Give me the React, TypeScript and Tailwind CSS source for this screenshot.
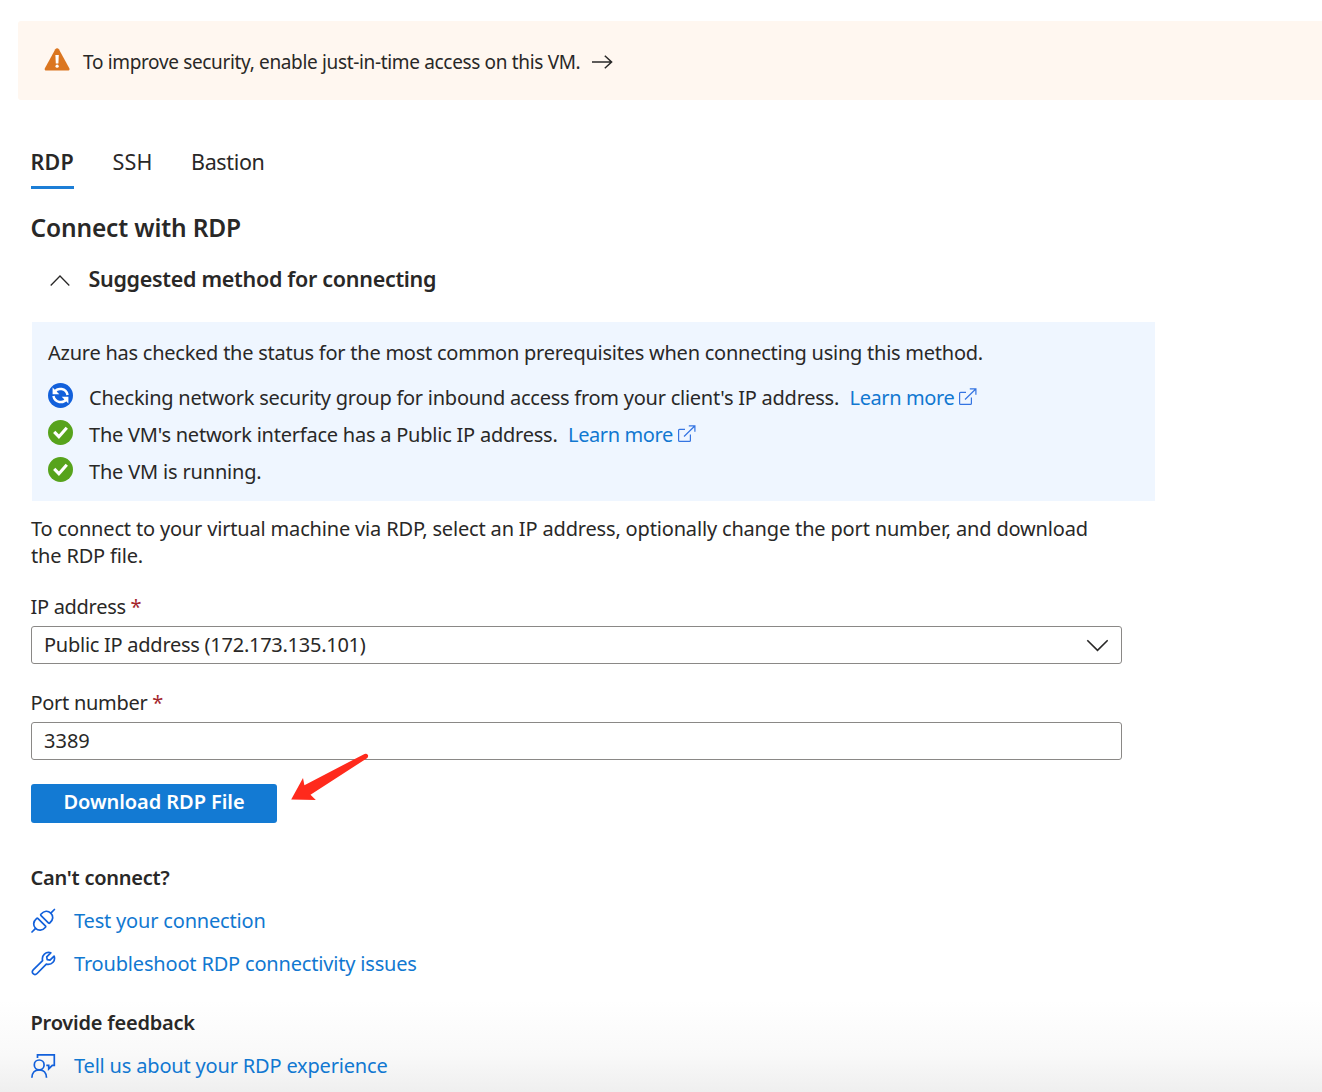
import type { ReactNode } from 'react';

function Warning() {
  return (
    <svg width="26" height="24" viewBox="0 0 26 24" className="shrink-0">
      <path d="M11.300 1.300c.9-1.400 2.700-1.400 3.600 0l10.400 19c.6 1.200 0 2.200-1.300 2.200H2.200C.9 22.500.300 21.500.9 20.300z" fill="#db7620" />
      <path d="M11.400 7h3.400l-.4 8.500h-2.600z" fill="#fff" />
      <circle cx="13.100" cy="18.200" r="1.600" fill="#fff" />
    </svg>
  );
}

function Syncing() {
  return (
    <svg width="25" height="25" viewBox="0 0 25 25" className="shrink-0">
      <circle cx="12.5" cy="12.500" r="12.500" fill="#1260db" />
      <g fill="none" stroke="#fff" strokeWidth="2.500">
        <path d="M7 8.500C9.500 4.600 18 4.800 19.600 12" />
        <path d="M18 16.500C15.500 20.400 7 20.200 5.400 13" />
      </g>
      <path d="M4.600 4.600V11.300H11.300zM20.400 20.400V13.700H13.700z" fill="#fff" />
    </svg>
  );
}

function Success() {
  return (
    <svg width="25" height="25" viewBox="0 0 25 25" className="shrink-0">
      <circle cx="12.5" cy="12.500" r="12.500" fill="#57a31c" />
      <path d="M6.200 11.900 10.900 16.700 18.800 7.700" fill="none" stroke="#fff" strokeWidth="3.100" />
    </svg>
  );
}

function External() {
  return (
    <svg width="18" height="18" viewBox="0 0 18 18" fill="none" stroke="#3474e2" strokeWidth="1.200" className="-mt-[2px] ml-[5px] shrink-0">
      <path d="M7 4.300H1.600a1 1 0 0 0-1 1V15.400a1 1 0 0 0 1 1H11.400a1 1 0 0 0 1-1V9.500" />
      <path d="M6 11.500 16.500 1.200M10.800 .8H16.900V6.700" />
    </svg>
  );
}

function Plug() {
  return (
    <svg width="25" height="25" viewBox="0 0 25 25" fill="none" stroke="#1260db" strokeWidth="1.700" strokeLinecap="round" strokeLinejoin="round">
      <path d="M1 24 4.600 20.400M19.800 5.100 23.400 1.500" />
      <path d="M9.800 7.300 17.600 15.100Q18.200 15.500 18.700 15C22.600 11.800 22.500 7.900 19.800 5.200 17.100 2.500 13.200 2.400 9.900 6.200Q9.400 6.800 9.800 7.300z" />
      <path d="M6.800 10.300 14.600 18.100Q15 18.600 14.500 19.200C11.200 23 7.300 23 4.600 20.300 1.900 17.600 1.900 13.700 5.700 10.400Q6.300 9.900 6.800 10.300z" />
    </svg>
  );
}

function WrenchIcon() {
  return (
    <svg width="25" height="25" viewBox="0 0 25 25" fill="none" stroke="#1260db" strokeWidth="1.700" strokeLinejoin="round">
      <path d="M19.800 1.800 15.700 5.900 16.200 8.600 19 9.200 23.100 5.100C24.700 9.500 21.200 14.500 15.300 13.200L6.100 22.500C3.400 25.200-.5 21.600 2.200 18.900L11.600 9.600C10.300 4.200 15 .3 19.800 1.800z" />
    </svg>
  );
}

function Feedback() {
  return (
    <svg width="25" height="25" viewBox="0 0 25 25" fill="none" stroke="#1260db" strokeWidth="1.700">
      <path d="M6.500 5V1.900H23.300V12.300H21.300L17.700 15.900V12.300H15.300" />
      <circle cx="8.200" cy="11.900" r="4.900" />
      <path d="M.9 24.800C.9 19.600 4 16.800 8.200 16.800S15.500 19.600 15.500 24.800" />
    </svg>
  );
}

function HelpLink({ icon, children }: { icon: ReactNode; children: ReactNode }) {
  return (
    <div className="flex h-[43px] items-center text-[#1178d1]">
      {icon}
      <a className="ml-[18px] tracking-[-0.18px]">{children}</a>
    </div>
  );
}

function LearnMore() {
  return (
    <a className="ml-[10.500px] flex items-center tracking-[-0.4px] text-[#1178d1]">
      Learn more
      <External />
    </a>
  );
}

function Check({ icon, children }: { icon: ReactNode; children: ReactNode }) {
  return (
    <div className="flex h-[37px] items-center">
      <span className="mr-4 -mt-[5px]">{icon}</span>
      {children}
    </div>
  );
}

export default function App() {
  return (
    <div className="relative h-[1092px] w-[1322px] overflow-hidden whitespace-nowrap bg-white bg-[linear-gradient(to_bottom,#ffffff_0px,#ffffff_1000px,#f9f9f9_1055px,#efefef_1092px)] pt-[21px] font-['Noto_Sans','Open_Sans',sans-serif] text-[20px] leading-6 text-[#292827]">
      <div className="ml-[18px] flex h-[79px] items-center rounded-l-[3px] bg-[#fff7f0] pl-[26px]">
        <span className="-mt-[2px]"><Warning /></span>
        <span className="ml-[13px] mt-[3px] text-[19px] tracking-[-0.34px]">To improve security, enable just-in-time access on this VM.</span>
        <svg width="22" height="14" viewBox="0 0 22 14" fill="none" stroke="#292827" strokeWidth="1.500" className="ml-[12px] mt-[2px]">
          <path d="M0 7H20M12.800 .7 19.600 7 12.800 13.300" />
        </svg>
      </div>

      <main className="pl-[31px]">
        <nav className="flex pt-[50px] text-[21.500px]">
          <div className="flex h-[39px] w-[43px] flex-col justify-between border-b-[3px] border-[#1c7ed6] font-semibold tracking-[0.2px]">
            <span className="-ml-[0.500px]">RDP</span>
          </div>
          <span className="ml-[38.500px] w-[40px] tracking-[0.2px]">SSH</span>
          <span className="ml-[38.500px] tracking-[-0.35px]">Bastion</span>
        </nav>

        <h1 className="-ml-[0.500px] mt-[23px] text-[24.500px] font-semibold leading-8 tracking-[-0.15px]">Connect with RDP</h1>

        <div className="mt-[19px] flex h-8 items-center">
          <svg width="20" height="12" viewBox="0 0 20 12" fill="none" stroke="#292827" strokeWidth="1.300" className="ml-[19px] mt-[4px]">
            <path d="M.7 10.500 10 1 19.300 10.500" />
          </svg>
          <h2 className="ml-[18.500px] text-[21.500px] font-semibold tracking-[-0.3px]">Suggested method for connecting</h2>
        </div>

        <section className="ml-px mt-[27px] h-[179px] w-[1123px] bg-[#eff6ff] pl-4 pt-[19px]">
          <p className="tracking-[-0.245px]">Azure has checked the status for the most common prerequisites when connecting using this method.</p>
          <div className="mt-[14px]">
            <Check icon={<Syncing />}>
              <span className="tracking-[-0.25px]">Checking network security group for inbound access from your client's IP address.</span>
              <LearnMore />
            </Check>
            <Check icon={<Success />}>
              <span className="tracking-[-0.23px]">The VM's network interface has a Public IP address.</span>
              <LearnMore />
            </Check>
            <Check icon={<Success />}>
              <span className="tracking-[-0.18px]">The VM is running.</span>
            </Check>
          </div>
        </section>

        <p className="mt-[14px] leading-[27px] tracking-[-0.168px]">
          To connect to your virtual machine via RDP, select an IP address, optionally change the port number, and download
          <br />
          the RDP file.
        </p>

        <label className="-ml-[0.500px] mt-[26px] block tracking-[-0.3px]">
          IP address <span className="text-[#a4262c]">*</span>
        </label>
        <div className="mt-[7px] flex h-[38px] w-[1091px] items-center justify-between rounded-[3px] border border-[#8a8886] bg-white pl-3 pr-[13px]">
          <span className="tracking-[-0.26px]">Public IP address (172.173.135.101)</span>
          <svg width="22" height="13" viewBox="0 0 22 13" fill="none" stroke="#292827" strokeWidth="1.600">
            <path d="M1.300 1.200 11.500 11.300 21.700 1.200" />
          </svg>
        </div>

        <label className="-ml-[0.500px] mt-[27px] block tracking-[-0.3px]">
          Port number <span className="text-[#a4262c]">*</span>
        </label>
        <div className="mt-[7px] flex h-[38px] w-[1091px] items-center rounded-[3px] border border-[#8a8886] bg-white pl-3">3389</div>

        <button className="mt-6 flex h-[39px] w-[246px] items-center justify-center rounded-[3px] bg-[#137ad3] pb-[3px] font-semibold tracking-[-0.06px] text-white">
          Download RDP File
        </button>

        <h3 className="-ml-[0.500px] mt-[43px] font-semibold tracking-[-0.24px]">Can't connect?</h3>
        <div className="mt-[9px]">
          <HelpLink icon={<Plug />}>Test your connection</HelpLink>
          <HelpLink icon={<WrenchIcon />}>Troubleshoot RDP connectivity issues</HelpLink>
        </div>

        <h3 className="-ml-[0.500px] mt-[26px] font-semibold tracking-[-0.22px]">Provide feedback</h3>
        <div className="mt-[9px]">
          <HelpLink icon={<Feedback />}>Tell us about your RDP experience</HelpLink>
        </div>
      </main>

      <svg width="80" height="50" viewBox="0 0 80 50" className="absolute left-[290px] top-[752px]">
        <path d="M1.200 47.500 13 26 14.400 33.200 74.500 1.900Q77 1.200 78 3.200 78.500 5 77 6.200L20.500 42.800 25.800 47.900z" fill="#ff2a1c" />
      </svg>
    </div>
  );
}
